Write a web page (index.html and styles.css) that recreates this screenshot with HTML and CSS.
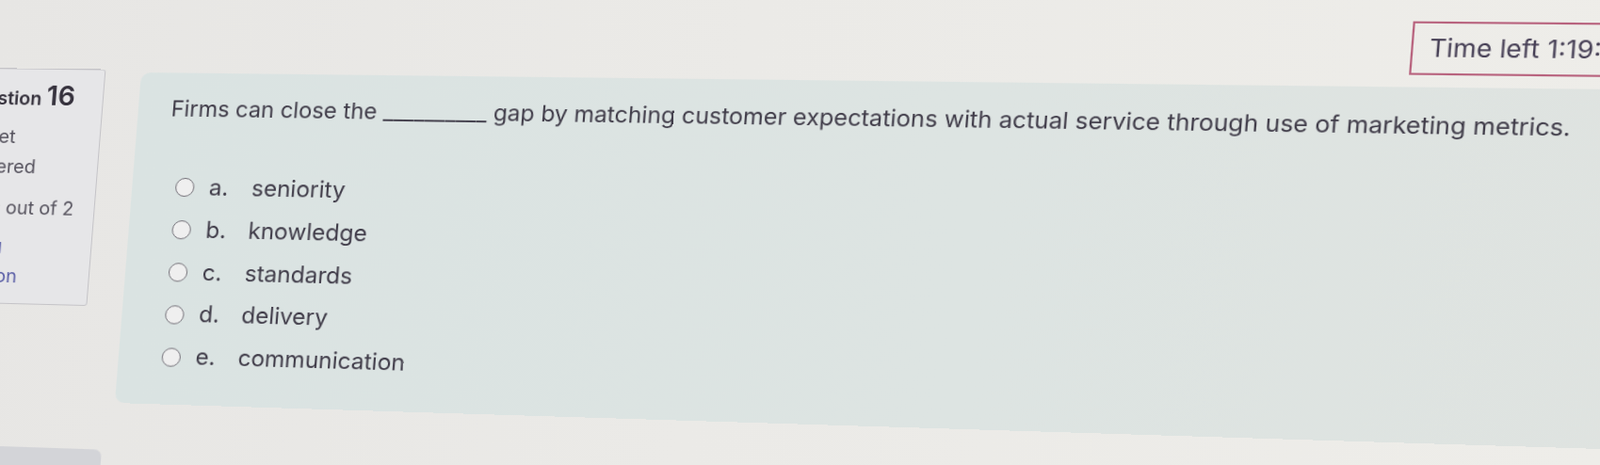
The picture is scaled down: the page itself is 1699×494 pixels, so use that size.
FILE: index.html
```html
<!DOCTYPE html>
<html lang="en">
<head>
<meta charset="utf-8">
<title>Quiz question 16</title>
<link rel="stylesheet" href="styles.css">
</head>
<body>
<div class="screen">
  <header class="topbar">
    <div class="timer">Time left 1:19:47</div>
  </header>
  <main class="content">
    <aside class="info">
      <h3 class="qno"><span class="qword">Question</span> <span class="num">16</span></h3>
      <div class="state">Not yet<br>answered</div>
      <div class="grade">Points out of 2</div>
      <div class="flag"><span class="flag-icon"></span>Flag<br>question</div>
    </aside>
    <section class="question">
      <p class="qtext">Firms can close the __________ gap by matching customer expectations with actual service through use of marketing metrics.</p>
      <div class="answers">
        <label class="opt"><span class="radio"></span><span class="letter">a.</span><span class="ans">seniority</span></label>
        <label class="opt"><span class="radio"></span><span class="letter">b.</span><span class="ans">knowledge</span></label>
        <label class="opt"><span class="radio"></span><span class="letter">c.</span><span class="ans">standards</span></label>
        <label class="opt"><span class="radio"></span><span class="letter">d.</span><span class="ans">delivery</span></label>
        <label class="opt"><span class="radio"></span><span class="letter">e.</span><span class="ans">communication</span></label>
      </div>
    </section>
  </main>
  <div class="nav"><div class="navbtn"></div></div>
</div>
</body>
</html>
```

FILE: styles.css
```css
html, body {
  margin: 0;
  padding: 0;
  width: 1699px;
  height: 494px;
  overflow: hidden;
}
body {
  background: linear-gradient(100deg, #e7e6e4 0%, #ebeae7 45%, #eeede9 100%);
  font-family: Inter, "Liberation Sans", Arial, sans-serif;
  color: #403c49;
}
/* photo perspective of the screen */
.screen {
  width: 1700px;
  height: 560px;
  transform-origin: 0 0;
  transform: matrix3d(0.98, 0.00713726, 0, -0.000054902, -0.0793412, 0.9917647, 0, 0, 0, 0, 1, 0, 7.87397, -1.070589, 0, 1);
}
.topbar {
  display: flex;
  justify-content: flex-end;
  padding: 11.5px 54px 0 0;
}
.timer {
  box-sizing: border-box;
  width: 240px;
  height: 53px;
  border: 2px solid #b8637e;
  padding-left: 15px;
  font-size: 24.5px;
  line-height: 49px;
  color: #463f55;
  white-space: nowrap;
  overflow: hidden;
}
.content {
  display: flex;
  align-items: flex-start;
  margin-top: 9.5px;
}
.info {
  box-sizing: border-box;
  flex: none;
  margin-left: -60px;
  width: 172px;
  height: 252px;
  border: 1.5px solid #c4c3c7;
  border-radius: 3px;
  background: #e6e6e8;
  padding: 10px 0 0 11.5px;
  font-size: 20px;
  color: #56535e;
}
.qno {
  margin: 0 0 0 6px;
  font-size: 20px;
  line-height: 36px;
  font-weight: 600;
  color: #35313c;
  white-space: nowrap;
}
.qno .num {
  font-size: 29px;
  line-height: 36px;
}
.state {
  margin-top: 6.5px;
  line-height: 32px;
}
.grade {
  margin-top: 14.5px;
  line-height: 29px;
  white-space: nowrap;
}
.flag {
  margin-top: 10px;
  line-height: 32px;
  color: #5a5ea6;
}
.flag-icon {
  display: inline-block;
  width: 23px;
}
.question {
  box-sizing: border-box;
  flex: none;
  margin: 3px 0 0 38px;
  width: 1550px;
  height: 351px;
  border-radius: 10px;
  background: linear-gradient(90deg, #dae3e2 0%, #dde4e2 55%, #dfe3e0 100%);
  padding: 22px 0 0 35px;
}
.qtext {
  margin: 0;
  font-size: 23.4px;
  line-height: 32px;
  white-space: nowrap;
}
.answers {
  margin-top: 44.9px;
  padding-left: 11px;
  display: grid;
  grid-auto-rows: 44.85px;
}
.opt {
  display: flex;
  align-items: center;
  font-size: 24px;
  line-height: 44.85px;
}
.radio {
  box-sizing: border-box;
  flex: none;
  width: 20px;
  height: 20px;
  border: 1.8px solid #737078;
  border-radius: 50%;
  background: #efefef;
  margin-right: 15.8px;
}
.letter {
  flex: none;
  width: 44.7px;
}
.nav {
  margin-top: 50px;
}
.navbtn {
  margin-left: -20px;
  width: 160px;
  height: 40px;
  border-radius: 8px;
  background: #d3d4d8;
}
```
